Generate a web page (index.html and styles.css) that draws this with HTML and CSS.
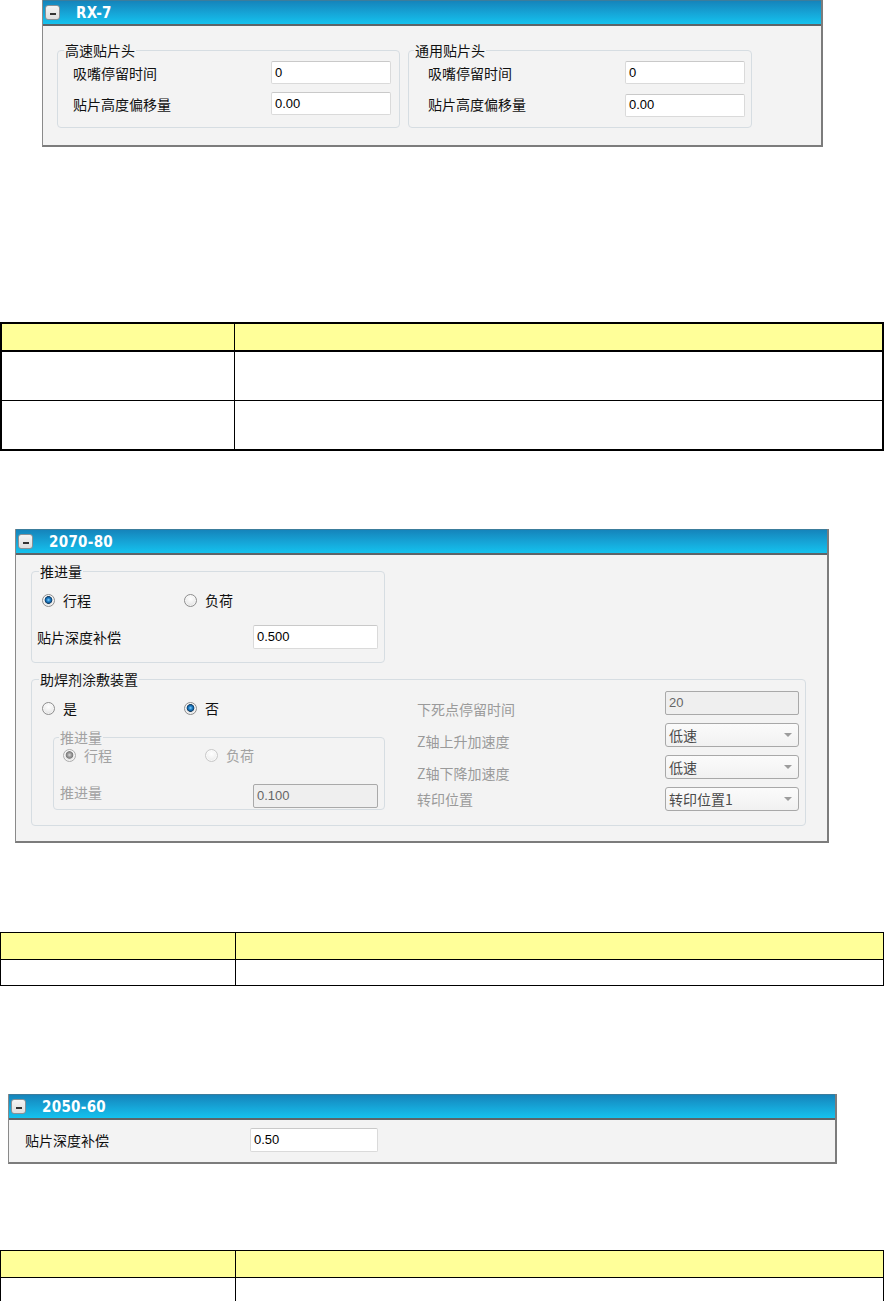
FILE: index.html
```html
<!DOCTYPE html>
<html lang="zh-CN">
<head>
<meta charset="utf-8">
<title>贴片参数</title>
<link rel="stylesheet" href="styles.css">
</head>
<body>

<div class="panel p1">
  <div class="ph"><span class="minus"></span><span class="pt">RX-7</span></div>
  <div class="pb pb1">
    <div class="grp g1">
      <div class="gt">高速贴片头</div>
      <div class="rows">
        <div class="row"><span>吸嘴停留时间</span><span class="inp w120">0</span></div>
        <div class="row"><span>贴片高度偏移量</span><span class="inp w120">0.00</span></div>
      </div>
    </div>
    <div class="grp g2">
      <div class="gt">通用贴片头</div>
      <div class="rows">
        <div class="row"><span>吸嘴停留时间</span><span class="inp w120">0</span></div>
        <div class="row"><span>贴片高度偏移量</span><span class="inp w120 shift">0.00</span></div>
      </div>
    </div>
  </div>
</div>

<table class="tbl thick t1">
  <colgroup><col class="c1"><col></colgroup>
  <tr class="hd"><th></th><th></th></tr>
  <tr class="r48"><td></td><td></td></tr>
  <tr class="r48 last"><td></td><td></td></tr>
</table>

<div class="panel p2">
  <div class="ph"><span class="minus"></span><span class="pt">2070-80</span></div>
  <div class="pb pb2">
    <div class="grp ga">
      <div class="gt">推进量</div>
      <div class="radios ra">
        <span class="rb on"><i></i>行程</span>
        <span class="rb"><i></i>负荷</span>
      </div>
      <div class="row rowa"><span>贴片深度补偿</span><span class="inp w125 h24">0.500</span></div>
    </div>
    <div class="grp gb">
      <div class="gt">助焊剂涂敷装置</div>
      <div class="gbody">
        <div class="lcol">
          <div class="radios rbrow">
            <span class="rb"><i></i>是</span>
            <span class="rb on"><i></i>否</span>
          </div>
          <div class="grp gc dis">
            <div class="gt">推进量</div>
            <div class="radios rc">
              <span class="rb on dis"><i></i>行程</span>
              <span class="rb dis"><i></i>负荷</span>
            </div>
            <div class="row rowc"><span>推进量</span><span class="inp w125 h24 off">0.100</span></div>
          </div>
        </div>
        <div class="rcol">
          <span class="rl">下死点停留时间</span><span class="inp h24 off">20</span>
          <span class="rl">Z轴上升加速度</span><span class="dd">低速<b class="arr"></b></span>
          <span class="rl">Z轴下降加速度</span><span class="dd">低速<b class="arr"></b></span>
          <span class="rl last">转印位置</span><span class="dd">转印位置1<b class="arr"></b></span>
        </div>
      </div>
    </div>
  </div>
</div>

<table class="tbl thin t2">
  <colgroup><col class="c1"><col></colgroup>
  <tr class="hd"><th></th><th></th></tr>
  <tr class="r24 last"><td></td><td></td></tr>
</table>

<div class="panel p3">
  <div class="ph"><span class="minus"></span><span class="pt">2050-60</span></div>
  <div class="pb pb3">
    <div class="row row3"><span class="l3">贴片深度补偿</span><span class="inp w128 h24">0.50</span></div>
  </div>
</div>

<table class="tbl thin t3">
  <colgroup><col class="c1"><col></colgroup>
  <tr class="hd3"><th></th><th></th></tr>
  <tr class="r24 last"><td></td><td></td></tr>
</table>

</body>
</html>
```

FILE: styles.css
```css
* { box-sizing: border-box; }
html, body { margin: 0; padding: 0; background: #fff; }
body {
  width: 884px;
  font-family: "Noto Sans CJK SC", "Noto Sans", sans-serif;
  font-size: 14px;
  line-height: 16px;
  color: #111;
}

/* ---------- panels ---------- */
.panel {
  background: #f3f3f3;
  border-left: 1px solid #8a8a8a;
  border-right: 2px solid #7c7c7c;
  border-bottom: 2px solid #7c7c7c;
}
.p1 { margin-left: 42px; width: 781px; }
.p2 { margin-top: 78px; margin-left: 15px; width: 814px; }
.p3 { margin-top: 108px; margin-left: 8px; width: 829px; }

.ph {
  height: 26px;
  display: flex;
  align-items: center;
  background: linear-gradient(#1584bb 0%, #16a6d8 55%, #14c2ee 100%);
  border-top: 1px solid #3c7d9c;
  border-bottom: 2px solid #5d6468;
}
.minus {
  width: 15px;
  height: 15px;
  margin-left: 2px;
  border: 1px solid #8a9196;
  border-radius: 3px;
  background: linear-gradient(#f4f4f4, #dedede);
  display: flex;
  align-items: center;
  justify-content: center;
}
.minus::before {
  content: "";
  width: 6px;
  height: 2px;
  margin-top: 2px;
  background: #333;
}
.pt {
  margin-left: 16px;
  color: #fff;
  font-family: "DejaVu Sans Condensed", "DejaVu Sans", sans-serif;
  font-stretch: condensed;
  font-weight: bold;
  font-size: 15px;
  letter-spacing: 0.3px;
}

/* ---------- group boxes ---------- */
.grp {
  border: 1px solid #d6dde2;
  border-radius: 4px;
}
.gt {
  width: fit-content;
  margin-top: -9px;
  margin-left: 6px;
  padding: 0 1px;
  background: #f3f3f3;
  line-height: 16px;
}
.dis, .dis .gt { color: #a2a2a2; }

.row {
  display: flex;
  align-items: center;
  justify-content: space-between;
}

/* panel 1 */
.pb1 {
  display: flex;
  gap: 8px;
  padding: 24px 0 17px 14px;
}
.g1 { width: 343px; padding: 0 8px 12px 15px; }
.g2 { width: 344px; padding: 0 6px 12px 19px; }
.g1 .gt { margin-left: -9px; }
.g2 .gt { margin-left: -14px; }
.rows { margin-top: 3px; display: flex; flex-direction: column; gap: 8px; }
.rows .row { height: 23px; }
.shift { margin-top: 3px; }

/* inputs */
.inp {
  display: flex;
  align-items: center;
  height: 23px;
  padding-left: 3px;
  background: #fff;
  border: 1px solid #dadada;
  border-top-color: #c9c9c9;
  border-radius: 2px;
  font-family: "Liberation Sans", Arial, sans-serif;
  font-size: 13px;
  color: #000;
}
.w120 { width: 120px; }
.w125 { width: 125px; }
.w128 { width: 128px; }
.h24 { height: 24px; }
.inp.off {
  background: #efefef;
  border: 1px solid #a9a9a9;
  color: #666;
}

/* radios */
.radios { display: flex; height: 16px; align-items: center; }
.rb {
  display: flex;
  align-items: center;
  gap: 8px;
  width: 142px;
  color: #111;
}
.rb i {
  width: 13px;
  height: 13px;
  border-radius: 50%;
  border: 1px solid #8e8e8e;
  background: radial-gradient(circle at 50% 35%, #ffffff 0%, #ececec 55%, #cdcdcd 100%);
  box-shadow: inset 0 0 0 1px rgba(255,255,255,0.6);
}
.rb.on i {
  background:
    radial-gradient(circle at 50% 45%, #8fd6ff 0, #2a8ad0 1.5px, #0c5592 3px, #1b3d5c 3.6px, rgba(0,0,0,0) 4.2px),
    radial-gradient(circle at 50% 35%, #ffffff 0%, #ececec 55%, #cdcdcd 100%);
}
.rb.dis { color: #a2a2a2; }
.rb.dis i { border-color: #c8c8c8; background: radial-gradient(circle at 50% 35%, #ffffff 0%, #f0f0f0 60%, #e0e0e0 100%); }
.rb.dis.on i {
  border-color: #adadad;
  background:
    radial-gradient(circle at 50% 45%, #d8d8d8 0, #9a9a9a 2px, #7d7d7d 3.4px, rgba(0,0,0,0) 4.2px),
    radial-gradient(circle at 50% 35%, #ffffff 0%, #ececec 55%, #d4d4d4 100%);
}

/* panel 2 */
.pb2 { padding: 16px 21px 15px 15px; }
.ga { width: 354px; padding: 0 6px 13px 5px; }
.ga .gt { margin-left: 2px; }
.ra { margin-top: 13px; padding-left: 5px; }
.rowa { margin-top: 17px; }

.gb { margin-top: 16px; padding: 0 6px 14px 0; }
.gb .gt { margin-left: 7px; }
.gbody { display: flex; }
.lcol { width: 353px; }
.rbrow { margin-top: 13px; padding-left: 10px; }
.gc { margin-top: 21px; margin-left: 21px; width: 332px; padding: 0 6px 1px 6px; }
.gc .gt { margin-left: -1px; }
.rc { margin-top: 2px; padding-left: 3px; }
.rowc { margin-top: 21px; align-items: flex-start; }

.rcol {
  flex: 1;
  margin-left: 32px;
  padding-top: 4px;
  display: grid;
  grid-template-columns: 1fr 134px;
  row-gap: 8px;
  color: #9a9a9a;
}
.rl {
  align-self: start;
  padding-top: 10px;
  margin-bottom: -10px;
}
.rl.last { padding-top: 4px; margin-bottom: -4px; }
.rcol .inp { height: 24px; }
.dd {
  display: flex;
  align-items: center;
  height: 24px;
  padding-left: 3px;
  border: 1px solid #a8a8a8;
  border-radius: 3px;
  background: linear-gradient(#fbfbfb, #f1f1f1);
  color: #4a4a4a;
  font-size: 14px;
}
.arr {
  margin-left: auto;
  margin-right: 6px;
  width: 0;
  height: 0;
  border-left: 4px solid transparent;
  border-right: 4px solid transparent;
  border-top: 4px solid #9c9c9c;
}

/* panel 3 */
.pb3 { padding: 8px 0 10px 16px; }
.row3 { justify-content: flex-start; }
.l3 { width: 225px; }

/* ---------- tables ---------- */
.tbl {
  width: 884px;
  border-collapse: separate;
  border-spacing: 0;
  table-layout: fixed;
}
.tbl th, .tbl td { padding: 0; }
.tbl th { background: #ffff99; }
.tbl tr > :first-child { border-right: 1px solid #000; }

.thick { margin-top: 175px; border: 2px solid #000; }
.thick .c1 { width: 233px; }
.thick .hd { height: 28px; }
.thick th { border-bottom: 2px solid #000; }
.thick .r48 { height: 49px; }
.thick .r48 td { border-bottom: 1px solid #000; }
.thick .r48.last { height: 48px; }
.thick .r48.last td { border-bottom: 0; }

.thin { border: 1px solid #000; }
.thin .c1 { width: 235px; }
.thin th { border-bottom: 1px solid #000; }
.t2 { margin-top: 89px; }
.t2 .hd { height: 27px; }
.t3 { margin-top: 86px; }
.t3 .hd3 { height: 27px; }
.thin .r24 { height: 25px; }
```
